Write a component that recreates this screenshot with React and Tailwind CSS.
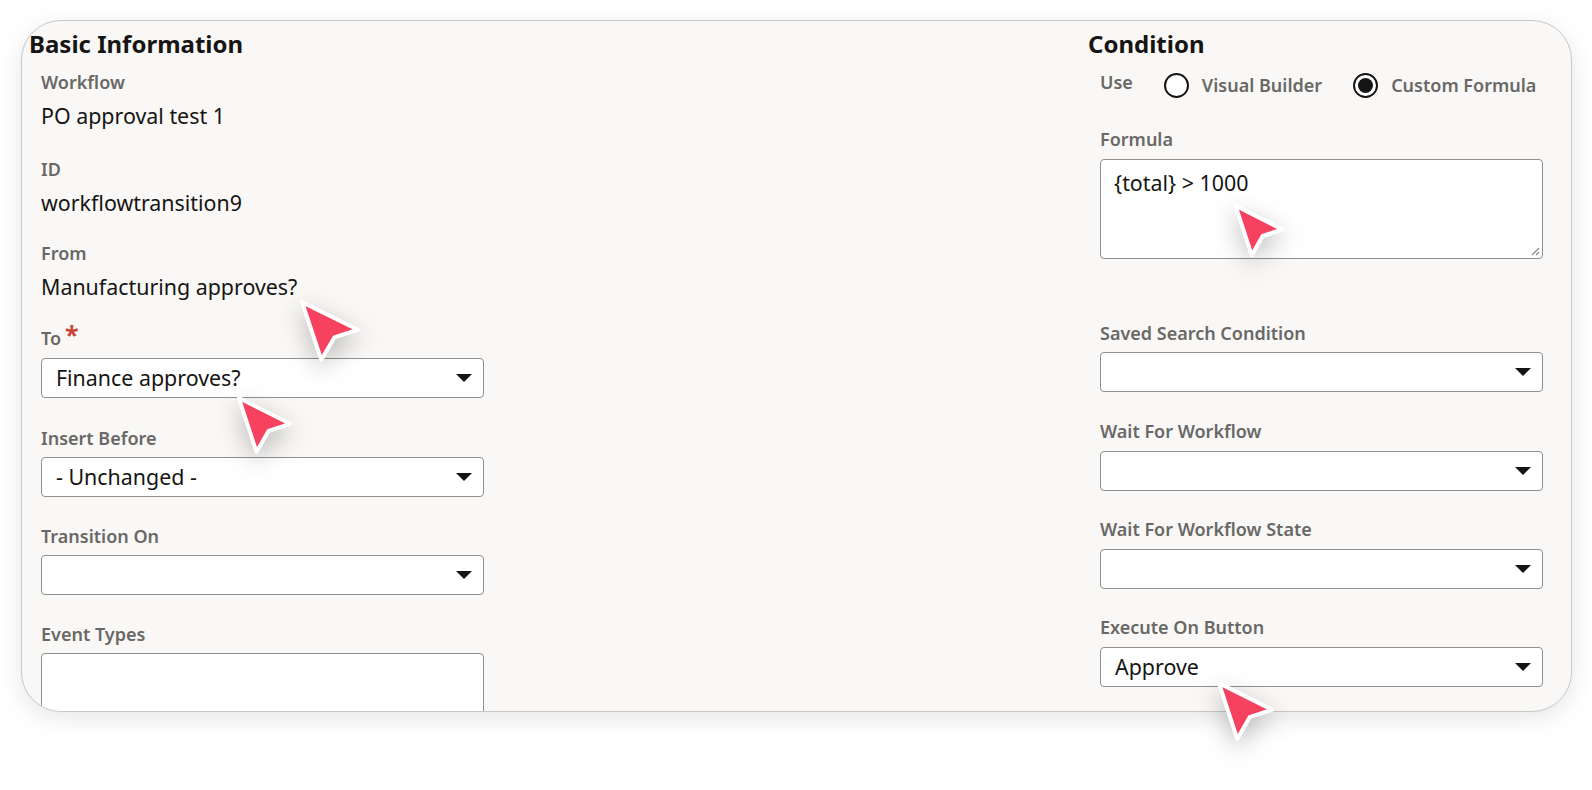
import React from 'react';

function Label({ children, required, className = '' }) {
  return (
    <div className={`flex items-start h-[24px] text-[18px] leading-[24px] font-semibold text-[#696866] ${className}`}>
      <span>{children}</span>
      {required && (
        <span className="ml-[4px] text-[25px] leading-[17px] font-bold text-[#c74634]">*</span>
      )}
    </div>
  );
}

function Value({ children }) {
  return <div className="mt-[8px] h-[28px] text-[21.4px] leading-[28px] text-[#161513]">{children}</div>;
}

function Select({ value, className = 'mt-[8px]' }) {
  return (
    <div className={`flex h-[40px] w-[443px] items-center justify-between rounded-[4px] border border-[#8f8f8f] bg-white pl-[14px] pr-[11px] text-[21.4px] leading-[28px] text-[#161513] ${className}`}>
      <span>{value}</span>
      <svg width="16" height="8" viewBox="0 0 16 8">
        <path d="M0 0h16L8 8z" fill="#161513" />
      </svg>
    </div>
  );
}

function Radio({ checked, label }) {
  return (
    <div className="flex h-[30px] items-center gap-[13px]">
      <span className="flex h-[25px] w-[25px] items-center justify-center rounded-full border-2 border-[#161513] bg-white">
        {checked && <span className="h-[15px] w-[15px] rounded-full bg-[#161513]" />}
      </span>
      <span className="text-[18px] leading-[24px] font-semibold text-[#696866]">{label}</span>
    </div>
  );
}

function Cursor({ x, y, w, h }) {
  return (
    <svg
      className="absolute drop-shadow-[0_8px_12px_rgba(0,0,0,0.25)]"
      style={{ left: x, top: y, width: w, height: h }}
      viewBox="0 0 100 100"
      preserveAspectRatio="none"
    >
      <polygon
        points="5,5 95,48 57,60 36,95"
        fill="#f6415f"
        stroke="#ffffff"
        strokeWidth="4"
        strokeLinejoin="round"
        vectorEffect="non-scaling-stroke"
      />
    </svg>
  );
}

export default function App() {
  return (
    <div className="relative h-[790px] w-[1592px] overflow-hidden bg-white pl-[21px] pt-[20px] font-['Noto_Sans',sans-serif]">
      {/* Card */}
      <div className="h-[692px] w-[1551px] overflow-hidden rounded-[40px] border border-[#c8c8c8] bg-[#f9f8f6] shadow-[0_6px_24px_rgba(0,0,0,0.10)]">
        <div className="flex justify-between pl-[7px] pr-[28px] pt-[8px]">
          {/* Basic Information */}
          <div className="w-[455px]">
            <h2 className="h-[30px] text-[24px] leading-[30px] font-bold text-[#161513]">Basic Information</h2>
            <div className="pl-[12px]">
              <Label className="mt-[11px]">Workflow</Label>
              <Value>PO approval test 1</Value>

              <Label className="mt-[27px]">ID</Label>
              <Value>workflowtransition9</Value>

              <Label className="mt-[24px]">From</Label>
              <Value>Manufacturing approves?</Value>

              <Label className="mt-[25px]" required>To</Label>
              <Select value="Finance approves?" />

              <Label className="mt-[28px]">Insert Before</Label>
              <Select value="- Unchanged -" className="mt-[7px]" />

              <Label className="mt-[27px]">Transition On</Label>
              <Select value="" className="mt-[7px]" />

              <Label className="mt-[27px]">Event Types</Label>
              <div className="mt-[7px] h-[100px] w-[443px] rounded-[4px] border border-[#8f8f8f] bg-white" />
            </div>
          </div>

          {/* Condition */}
          <div className="w-[455px]">
            <h2 className="h-[30px] text-[24px] leading-[30px] font-bold text-[#161513]">Condition</h2>
            <div className="pl-[12px]">
              <div className="mt-[11px] flex items-start">
                <Label>Use</Label>
                <div className="ml-[31px] flex gap-[31px]">
                  <Radio label="Visual Builder" />
                  <Radio label="Custom Formula" checked />
                </div>
              </div>

              <Label className="mt-[27px]">Formula</Label>
              <div className="relative mt-[8px] h-[100px] w-[443px] rounded-[4px] border border-[#8f8f8f] bg-white pl-[13px] pt-[9px] text-[21.4px] leading-[28px] text-[#161513]">
                {'{total} > 1000'}
                <svg className="absolute bottom-[2px] right-[2px]" width="10" height="10" viewBox="0 0 10 10">
                  <path d="M9 2L2 9M9 6L6 9" stroke="#8a8a8a" strokeWidth="1.2" />
                </svg>
              </div>

              <Label className="mt-[62px]">Saved Search Condition</Label>
              <Select value="" className="mt-[7px]" />

              <Label className="mt-[27px]">Wait For Workflow</Label>
              <Select value="" />

              <Label className="mt-[26px]">Wait For Workflow State</Label>
              <Select value="" />

              <Label className="mt-[26px]">Execute On Button</Label>
              <Select value="Approve" />
            </div>
          </div>
        </div>
      </div>

      {/* Pointer overlays */}
      <Cursor x={299} y={299} w={62} h={64} />
      <Cursor x={236} y={395} w={57} h={60} />
      <Cursor x={1233} y={203} w={52} h={55} />
      <Cursor x={1216} y={680} w={59} h={62} />
    </div>
  );
}
